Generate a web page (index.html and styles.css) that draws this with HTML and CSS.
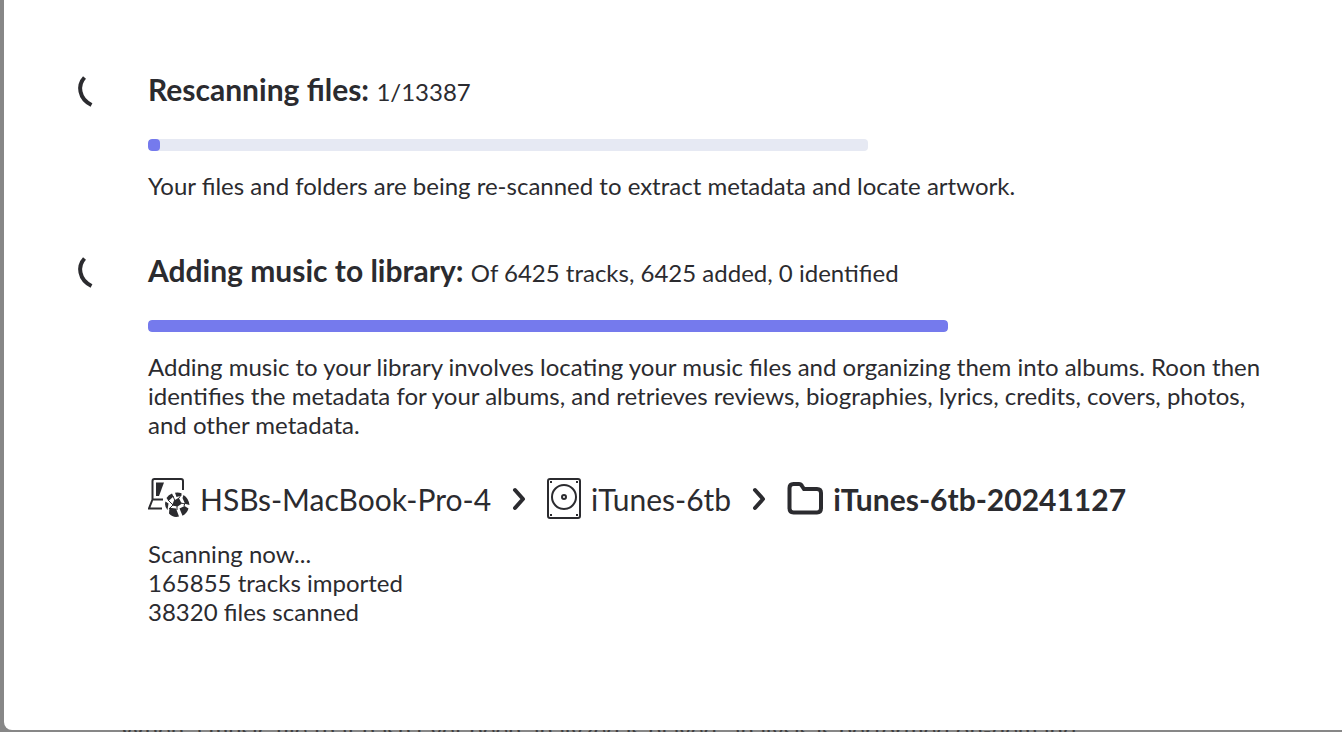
FILE: index.html
```
<!DOCTYPE html>
<html lang="en">
<head>
<meta charset="UTF-8">
<meta name="viewport" content="width=device-width, initial-scale=1.0">
<title>Library import</title>
<link rel="stylesheet" href="styles.css">
</head>
<body>

<p class="backdrop-text">When a music file that hasn't yet been analyzed is played, analysis is performed on-demand.</p>

<main class="dialog">
    <section class="task">
        <svg class="spinner" viewBox="0 0 40 40" aria-hidden="true">
            <path d="M8.500 6.500 C1.500 14 2.500 27.500 15.500 34"/>
        </svg>
        <div class="task-body">
            <h2 class="task-title" id="rescan">Rescanning files: <span class="count">1/13387</span></h2>
            <progress class="bar bar-short" value="12" max="720" aria-labelledby="rescan"></progress>
            <p class="text">Your files and folders are being re-scanned to extract metadata and locate artwork.</p>
        </div>
    </section>

    <section class="task">
        <svg class="spinner" viewBox="0 0 40 40" aria-hidden="true">
            <path d="M8.500 6.500 C1.500 14 2.500 27.500 15.500 34"/>
        </svg>
        <div class="task-body">
            <h2 class="task-title" id="adding">Adding music to library: <span class="count">Of 6425 tracks, 6425 added, 0 identified</span></h2>
            <progress class="bar" value="6425" max="6425" aria-labelledby="adding"></progress>
            <p class="text">Adding music to your library involves locating your music files and organizing them into albums. Roon then identifies the metadata for your albums, and retrieves reviews, biographies, lyrics, credits, covers, photos, and other metadata.</p>

            <div class="path">
                <!-- networked computer -->
                <svg class="icon icon-computer" viewBox="0 0 42 42" aria-hidden="true">
                    <path class="line" d="M15 21.500H4.500V3Q4.500 1 6.500 1H33Q35 1 35 3V12M4.500 21.500L1 30.500H14"/>
                    <path class="fill" d="M8 4.500H16L11 18H8Z"/>
                    <path class="fill" d="M18.500 20Q20.500 16.500 24 15.500L25.500 18.500L20.500 23ZM27 14.800Q30 14 33.500 15.200L33.500 17.500L28.500 19ZM26 22.500L30.800 19.700L33.800 25.700L29.500 28.500L24 27.500ZM35.500 17Q40.500 20 41.500 27L37 25.700L34.500 20ZM17.500 23.500L20.500 25.500L19.500 32Q16 28 17.500 23.500ZM21.500 29.700L28 30.500L31 38.500Q25 40 21 35.500ZM31.500 30.500L36.500 28L40.500 30.500Q39 35.500 34.500 37.700Z"/>
                    <path class="thin" d="M20 22L25 27L21 31M25 18L27 23M33 17L31 20M33 25L37 26M29 28L29 32M36 28L37 25"/>
                </svg>
                <span>HSBs-MacBook-Pro-4</span>
                <svg class="chevron" viewBox="0 0 14 24" aria-hidden="true">
                    <path d="M3 3L11 12L3 21"/>
                </svg>
                <!-- hard drive -->
                <svg class="icon icon-drive" viewBox="0 0 34 42" aria-hidden="true">
                    <rect class="line" x="1" y="1" width="32" height="39" rx="2"/>
                    <circle class="line" cx="17" cy="19" r="12"/>
                    <circle class="line" cx="17" cy="19" r="2"/>
                    <path class="fill" d="M3 3h2v2H3zM29 3h2v2h-2zM3 36h2v2H3zM29 36h2v2h-2z"/>
                </svg>
                <span>iTunes-6tb</span>
                <svg class="chevron" viewBox="0 0 14 24" aria-hidden="true">
                    <path d="M3 3L11 12L3 21"/>
                </svg>
                <!-- folder -->
                <svg class="icon icon-folder" viewBox="0 0 36 42" aria-hidden="true">
                    <path d="M2.500 10Q2.500 6 6.500 6H12Q14 6 15 8L17 11H30Q34 11 34 15V30Q34 34.500 30 34.500H6.500Q2.500 34.500 2.500 30Z"/>
                </svg>
                <strong>iTunes-6tb-20241127</strong>
            </div>

            <ul class="stats">
                <li>Scanning now...</li>
                <li>165855 tracks imported</li>
                <li>38320 files scanned</li>
            </ul>
        </div>
    </section>
</main>

</body>
</html>
```
FILE: styles.css
```
* {
    box-sizing: border-box;
}
body {
    margin: 0;
    padding: 0 0 2px 4px;
    display: flex;
    height: 100vh;
    overflow: hidden;
    background: #878787;
    color: #2b2b2f;
    font-family: Lato, sans-serif;
    font-size: 24px;
    line-height: 29px;
}
h2, p, ul {
    margin: 0;
    padding: 0;
}
/* page content that shows under the dialog */
.backdrop-text {
    position: absolute;
    left: 120px;
    bottom: -12px;
    color: #3f3f40;
    white-space: nowrap;
}
.dialog {
    position: relative;
    flex: 1;
    display: flex;
    flex-direction: column;
    gap: 52px;
    padding: 71px 72px 0;
    background: #fff;
    border-bottom-left-radius: 8px;
}
.task {
    display: flex;
    gap: 32px;
}
.spinner {
    flex: none;
    width: 40px;
    height: 40px;
    fill: none;
    stroke: #2b2b2f;
    stroke-width: 4;
}
.task-body {
    flex: 1;
}
.task-title {
    font-size: 30px;
    font-weight: 700;
    line-height: 36px;
}
.count {
    font-size: 24px;
    font-weight: 400;
}
.bar {
    appearance: none;
    display: block;
    width: 100%;
    max-width: 800px;
    height: 12px;
    margin: 29px 0 20px;
    border: 0;
    border-radius: 4px;
    overflow: hidden;
    background: #e6e9f3;
}
.bar-short {
    max-width: 720px;
}
.bar::-webkit-progress-bar {
    background: #e6e9f3;
}
.bar::-webkit-progress-value {
    background: #757aed;
    border-radius: 4px;
}
.path {
    display: flex;
    align-items: center;
    margin: 39px 0 19px;
    font-size: 30px;
    line-height: 42px;
}
.path strong {
    font-weight: 700;
}
.icon {
    flex: none;
    height: 42px;
    margin-right: 10px;
}
.icon-computer {
    width: 42px;
}
.icon-drive {
    width: 34px;
}
.icon-folder {
    width: 36px;
    fill: none;
    stroke: #2b2b2f;
    stroke-width: 4;
}
.line {
    fill: none;
    stroke: #2b2b2f;
    stroke-width: 2;
}
.fill {
    fill: #2b2b2f;
}
.thin {
    fill: none;
    stroke: #2b2b2f;
    stroke-width: 1;
}
.chevron {
    flex: none;
    width: 14px;
    height: 24px;
    margin: 0 21px;
    fill: none;
    stroke: #2b2b2f;
    stroke-width: 4;
    stroke-linecap: round;
    stroke-linejoin: round;
}
.stats {
    list-style: none;
}
```
